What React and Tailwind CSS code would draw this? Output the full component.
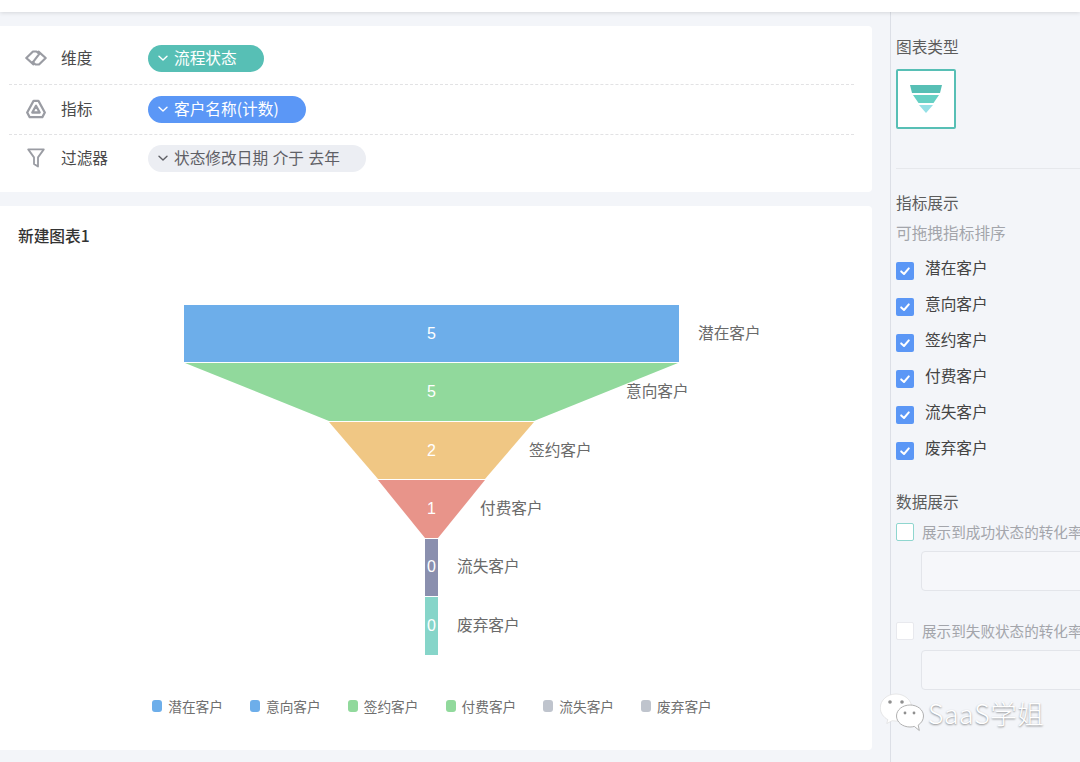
import React from "react";

const ChevronDown = ({ className }) => (
  <svg viewBox="0 0 12 12" className={className} fill="none" stroke="currentColor" strokeWidth="1.4" strokeLinecap="round" strokeLinejoin="round">
    <path d="M2 4.2 6 8 10 4.2" />
  </svg>
);

const LinkIcon = () => (
  <svg viewBox="0 0 22 16" className="w-[22px] h-[16px]" fill="none" stroke="#9a9ca3" strokeWidth="2.2" strokeLinejoin="round" strokeLinecap="round">
    <path d="M8.500 14.300 1.300 8 8 1.500h3.500l2.800 2.300L8 12.200" />
    <path d="M13.500 1.700 20.700 8 14 14.500h-3.500L7.700 12.200" />
  </svg>
);

const TriIcon = () => (
  <svg viewBox="0 0 20 20" className="w-[20px] h-[20px]" fill="none" stroke="#9a9ca3" strokeWidth="2.3" strokeLinejoin="round">
    <path d="M7.600 1.800h4.800L18.800 13.500 16.300 18.200H3.700L1.200 13.500Z" />
    <path d="M10 6.800 6.300 13.500h7.400Z" />
  </svg>
);

const FilterIcon = () => (
  <svg viewBox="0 0 18 20" className="w-[18px] h-[20px]" fill="none" stroke="#9a9ca3" strokeWidth="1.8" strokeLinejoin="round">
    <path d="M1.200 1.400h15.600L11 9.400v9.200L7 16V9.400Z" />
  </svg>
);

const Check = () => (
  <span className="w-[18px] h-[18px] rounded-[2px] bg-[#5b97f6] flex items-center justify-center shrink-0">
    <svg viewBox="0 0 12 12" className="w-[12px] h-[12px]" fill="none" stroke="#fff" strokeWidth="2" strokeLinecap="round" strokeLinejoin="round">
      <path d="M2.200 6.400 5 9l4.800-5.600" />
    </svg>
  </span>
);

const Row = ({ icon, label, pill, width, pillClass, dashed, top }) => (
  <div className={`h-[50px] ${top} ${dashed ? "border-b border-dashed border-[#e2e2e4]" : ""}`}>
    <div className="h-[27px] flex items-center">
      <div className="w-[52px] pl-[2px] pb-[2px] flex items-center justify-center shrink-0">{icon}</div>
      <div className="w-[87px] pb-[2px] text-[15.7px] text-[#4a4a4a] shrink-0">{label}</div>
      <div className={`h-[27px] rounded-full flex items-center pl-[9px] pb-[2px] text-[15.7px] [word-spacing:1px] whitespace-nowrap ${width} ${pillClass}`}>
        <ChevronDown className="w-[12px] h-[12px] mr-[5px] shrink-0" />
        {pill}
      </div>
    </div>
  </div>
);

const names = ["潜在客户", "意向客户", "签约客户", "付费客户", "流失客户", "废弃客户"];

const funnel = [
  { pts: "184,305 679,305 679,362 184,362", fill: "#6daeea", v: 5, y: 333, lx: 698 },
  { pts: "185,363 678,363 534,421 329,421", fill: "#91d99c", v: 5, y: 391, lx: 626 },
  { pts: "329,422 534,422 485,479 378,479", fill: "#f0c784", v: 2, y: 450, lx: 529 },
  { pts: "378,480 485,480 438,538 425,538", fill: "#e8948a", v: 1, y: 508, lx: 480 },
  { pts: "425,539 438,539 438,596 425,596", fill: "#8a8fae", v: 0, y: 566, lx: 457 },
  { pts: "425,597 438,597 438,655 425,655", fill: "#86d5c9", v: 0, y: 625, lx: 457 },
];

const legend = ["bg-[#6daeea]", "bg-[#6daeea]", "bg-[#91d99c]", "bg-[#91d99c]", "bg-[#bfc4cd]", "bg-[#bfc4cd]"];

export default function App() {
  return (
    <div className="relative w-[1080px] h-[762px] overflow-hidden bg-[#f3f5f9] font-['Noto_Sans_CJK_SC',sans-serif] flex flex-col">
      <div className="h-[12px] bg-white shadow-[0_1px_4px_rgba(0,0,0,0.12)] shrink-0 relative" />
      <div className="flex flex-1 min-h-0">
        <main className="w-[872px] shrink-0 pt-[14px] flex flex-col gap-[14px]">
          <section className="h-[166px] bg-white rounded-r-[4px] pl-[9px] pr-[18px] pt-[9px]">
            <Row top="pt-[10px]" icon={<LinkIcon />} label="维度" pill="流程状态" width="w-[116px]" pillClass="bg-[#57bfb5] text-white" dashed />
            <Row top="pt-[11px]" icon={<TriIcon />} label="指标" pill="客户名称(计数)" width="w-[158px]" pillClass="bg-[#5b97f6] text-white" dashed />
            <Row top="pt-[10px]" icon={<FilterIcon />} label="过滤器" pill="状态修改日期 介于 去年" width="w-[218px]" pillClass="bg-[#eceef3] text-[#5f6066]" />
          </section>
          <section className="h-[544px] bg-white rounded-r-[4px] relative flex flex-col">
            <h2 className="pl-[18px] pt-[19px] text-[15.7px] leading-[22px] font-medium text-[#333333]">新建图表1</h2>
            <svg viewBox="0 259 872 410" className="w-[872px] h-[410px] mt-[12px] block">
              {funnel.map((f, i) => (
                <g key={i}>
                  <polygon points={f.pts} fill={f.fill} />
                  <text x="431.500" y={f.y + 5.5} textAnchor="middle" fontSize="16" fontFamily="'Liberation Sans', sans-serif" fill="#ffffff">{f.v}</text>
                  <text x={f.lx} y={f.y + 6} fontSize="15.700" fill="#6a6a6a">{names[i]}</text>
                </g>
              ))}
            </svg>
            <div className="flex justify-center gap-[27px] mt-[27px] pr-[8px]">
              {names.map((n, i) => (
                <div key={n} className="flex items-center gap-[6px] h-[20px] text-[13.7px] text-[#6f6f6f] whitespace-nowrap">
                  <span className={`w-[10px] h-[12px] rounded-[3px] ${legend[i]}`} />
                  {n}
                </div>
              ))}
            </div>
          </section>
        </main>
        <aside className="ml-[18px] flex-1 min-w-0 border-l border-[#dcdfe6] pl-[5px] text-[15.7px] text-[#5c5c5c] overflow-hidden">
          <div className="h-[22px] mt-[24px] leading-[22px] whitespace-nowrap">图表类型</div>
          <div className="mt-[11px] w-[60px] h-[60px] border-2 border-[#57bfb5] rounded-[2px] bg-white flex items-center justify-center">
            <svg viewBox="0 0 32 28" className="w-[32px] h-[28px]">
              <polygon points="0,0 32,0 30,8 2,8" fill="#57bfb5" />
              <polygon points="3,10 29,10 23.500,18 8.500,18" fill="#66d0c4" />
              <polygon points="9,20 23,20 16,28" fill="#95e0e6" />
            </svg>
          </div>
          <div className="mt-[39px] h-px bg-[#e6e8ec]" />
          <div className="mt-[23px] h-[22px] leading-[22px] whitespace-nowrap">指标展示</div>
          <div className="mt-[8px] h-[22px] leading-[22px] text-[#a3a5ab] whitespace-nowrap">可拖拽指标排序</div>
          <div className="mt-[17px] flex flex-col gap-[18px]">
            {names.map((n) => (
              <div key={n} className="flex items-start h-[18px] whitespace-nowrap">
                <span className="mt-[1px]"><Check /></span>
                <span className="ml-[11px] -mt-[3px] leading-[20px] text-[#444444]">{n}</span>
              </div>
            ))}
          </div>
          <div className="mt-[32px] h-[22px] leading-[22px] whitespace-nowrap">数据展示</div>
          <div className="mt-[10px] flex items-center h-[18px] whitespace-nowrap">
            <span className="w-[18px] h-[18px] shrink-0 rounded-[2px] bg-white border border-[#8fd6cf]" />
            <span className="ml-[8px] text-[14.6px] text-[#a3a5ab]">展示到成功状态的转化率</span>
          </div>
          <div className="mt-[10px] ml-[25px] h-[40px] w-[200px] rounded-[4px] border border-[#e3e5ea] bg-[#f6f7fa]" />
          <div className="mt-[31px] flex items-center h-[18px] whitespace-nowrap">
            <span className="w-[18px] h-[18px] shrink-0 rounded-[2px] bg-white border border-[#e8e9ee]" />
            <span className="ml-[8px] text-[14.6px] text-[#a3a5ab]">展示到失败状态的转化率</span>
          </div>
          <div className="mt-[10px] ml-[25px] h-[40px] w-[200px] rounded-[4px] border border-[#e3e5ea] bg-[#f6f7fa]" />
        </aside>
      </div>
      <div className="absolute left-[880px] top-[693px] flex items-center">
        <svg viewBox="0 0 44 40" className="w-[44px] h-[40px]">
          <path d="M16 1C7.200 1 .3 7.200 .3 14.800c0 5 3 9.300 7.500 11.800L6.800 30.500l5.400-2.800c1.200.2 2.500.3 3.800.3 8.800 0 15.800-5.900 15.800-13.200S24.800 1 16 1Z" fill="#ffffff" stroke="#d8d8d8" strokeWidth="0.600" />
          <path d="M30 12C22.500 12 16.500 16.900 16.500 23s6 11 13.500 11c1.500 0 3-.2 4.300-.6l5 4.100-1.100-5.400C41.500 30 43.500 26.700 43.500 23 43.500 16.900 37.500 12 30 12Z" fill="#ffffff" stroke="#a8a8a8" strokeWidth="0.900" />
          <circle cx="10" cy="9" r="1.800" fill="#8f8f8f" />
          <circle cx="22" cy="9" r="1.800" fill="#8f8f8f" />
          <circle cx="25" cy="20" r="1.400" fill="#8f8f8f" />
          <circle cx="34" cy="20" r="1.400" fill="#8f8f8f" />
        </svg>
        <span className="ml-[4px] text-[26.500px] tracking-[0.6px] leading-[34px] font-light text-white whitespace-nowrap [text-shadow:0_1px_2px_rgba(0,0,0,0.45)]">SaaS学姐</span>
      </div>
    </div>
  );
}
